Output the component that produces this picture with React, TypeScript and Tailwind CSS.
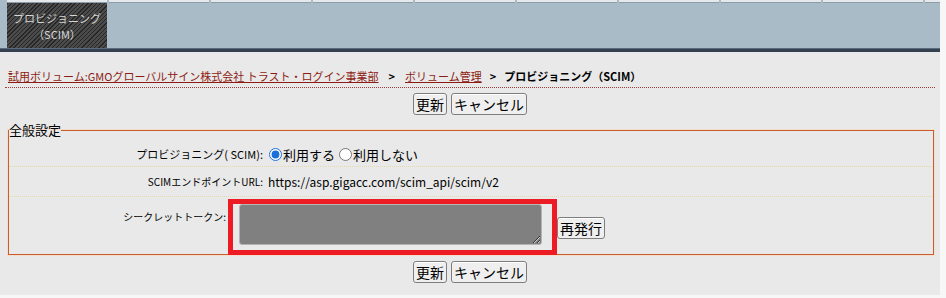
import React from "react";

const tabCount = 10;

const Btn: React.FC<{ children: React.ReactNode; className?: string }> = ({ children, className = "" }) => (
  <button
    className={
      "h-[22px] px-[2px] text-[14px] leading-none text-black bg-[#efefef] border border-[#7d7d7d] rounded-[3px] shadow-[inset_0_1px_0_#fff] " +
      className
    }
  >
    {children}
  </button>
);

const App: React.FC = () => {
  return (
    <div className="w-[946px] h-[298px] bg-[#f7f7f7] font-['Noto_Sans_CJK_JP',sans-serif] overflow-hidden">
      <div className="w-[940px] h-[295px] bg-[#e9e9e9]">
        {/* tabs */}
        <div className="h-[48px] bg-[#a9bbc7] flex gap-[2px] pl-[7px] overflow-hidden">
          {Array.from({ length: tabCount }).map((_, i) => (
            <div key={i} className="w-[100px] shrink-0 flex flex-col">
              <div className="h-[3px] bg-[#e6e9ec] border-b border-[#8d9cab]" />
              {i === 0 && (
                <div className="flex-1 flex flex-col items-center justify-center text-[11px] leading-[16px] text-[#d6d6d6] bg-[repeating-linear-gradient(135deg,#262626_0px,#262626_1px,#4b4b4b_1px,#4b4b4b_3px)]">
                  <span>プロビジョニング</span>
                  <span>（SCIM）</span>
                </div>
              )}
            </div>
          ))}
        </div>
        <div className="h-[4px] bg-[#364150] border-t border-[#5b6a7d]" />

        <div className="px-[5px]">
          {/* breadcrumb */}
          <div className="pt-[16px] pb-[3px] pl-[3px] border-b border-dotted border-[#a33a3a] text-[11px] leading-[16px] flex items-center">
            <a className="text-[#8c1c13] underline">試用ボリューム:GMOグローバルサイン株式会社 トラスト・ログイン事業部</a>
            <span className="font-bold text-black mx-[10px]">&gt;</span>
            <a className="text-[#8c1c13] underline">ボリューム管理</a>
            <span className="font-bold text-black ml-[8px] mr-[8px]">&gt;</span>
            <span className="font-bold text-black">プロビジョニング（SCIM）</span>
          </div>

          <div className="flex justify-center gap-[4px] mt-[5px]">
            <Btn>更新</Btn>
            <Btn>キャンセル</Btn>
          </div>

          {/* general settings */}
          <fieldset className="ml-[3px] mr-px mt-[6px] border border-[#c65f2d] shadow-[0_0_0_1px_#f6dccd]">
            <legend className="text-[13px] leading-[18px] text-black">全般設定</legend>

            <div className="flex items-center h-[24px] mt-[4px] border-b border-dotted border-[#e4d9a8]">
              <div className="w-[254px] text-right text-[11px] text-black">プロビジョニング( SCIM):</div>
              <label className="ml-[6px] flex items-center text-[13px] text-black">
                <input type="radio" name="scim" defaultChecked className="w-[13px] h-[13px] accent-[#1a6fd8]" />
                <span className="ml-[1px]">利用する</span>
              </label>
              <label className="ml-[4px] flex items-center text-[13px] text-black">
                <input type="radio" name="scim" className="w-[13px] h-[13px]" />
                <span className="ml-[1px]">利用しない</span>
              </label>
            </div>

            <div className="flex items-center h-[30px] border-b border-dotted border-[#e4d9a8]">
              <div className="w-[254px] text-right text-[10px] text-black">SCIMエンドポイントURL:</div>
              <div className="ml-[5px] text-[12px] text-black">https://asp.gigacc.com/scim_api/scim/v2</div>
            </div>

            <div className="relative flex items-start h-[57px] pt-[7px]">
              <div className="w-[217px] pt-[5px] text-right text-[10px] text-black whitespace-nowrap">シークレットトークン:</div>
              <textarea
                readOnly
                className="ml-[13px] w-[303px] h-[41px] bg-[#808080] border border-[#b4b4b4] rounded-[3px] resize-y"
              />
              <Btn className="ml-[15px] mt-[13px] px-[1px]">再発行</Btn>
              <div className="absolute left-[219px] top-[2px] w-[329px] h-[56px] border-[5px] border-[#ed1c24]" />
            </div>
          </fieldset>

          <div className="flex justify-center gap-[4px] mt-[6px]">
            <Btn>更新</Btn>
            <Btn>キャンセル</Btn>
          </div>
        </div>
      </div>
    </div>
  );
};

export default App;
